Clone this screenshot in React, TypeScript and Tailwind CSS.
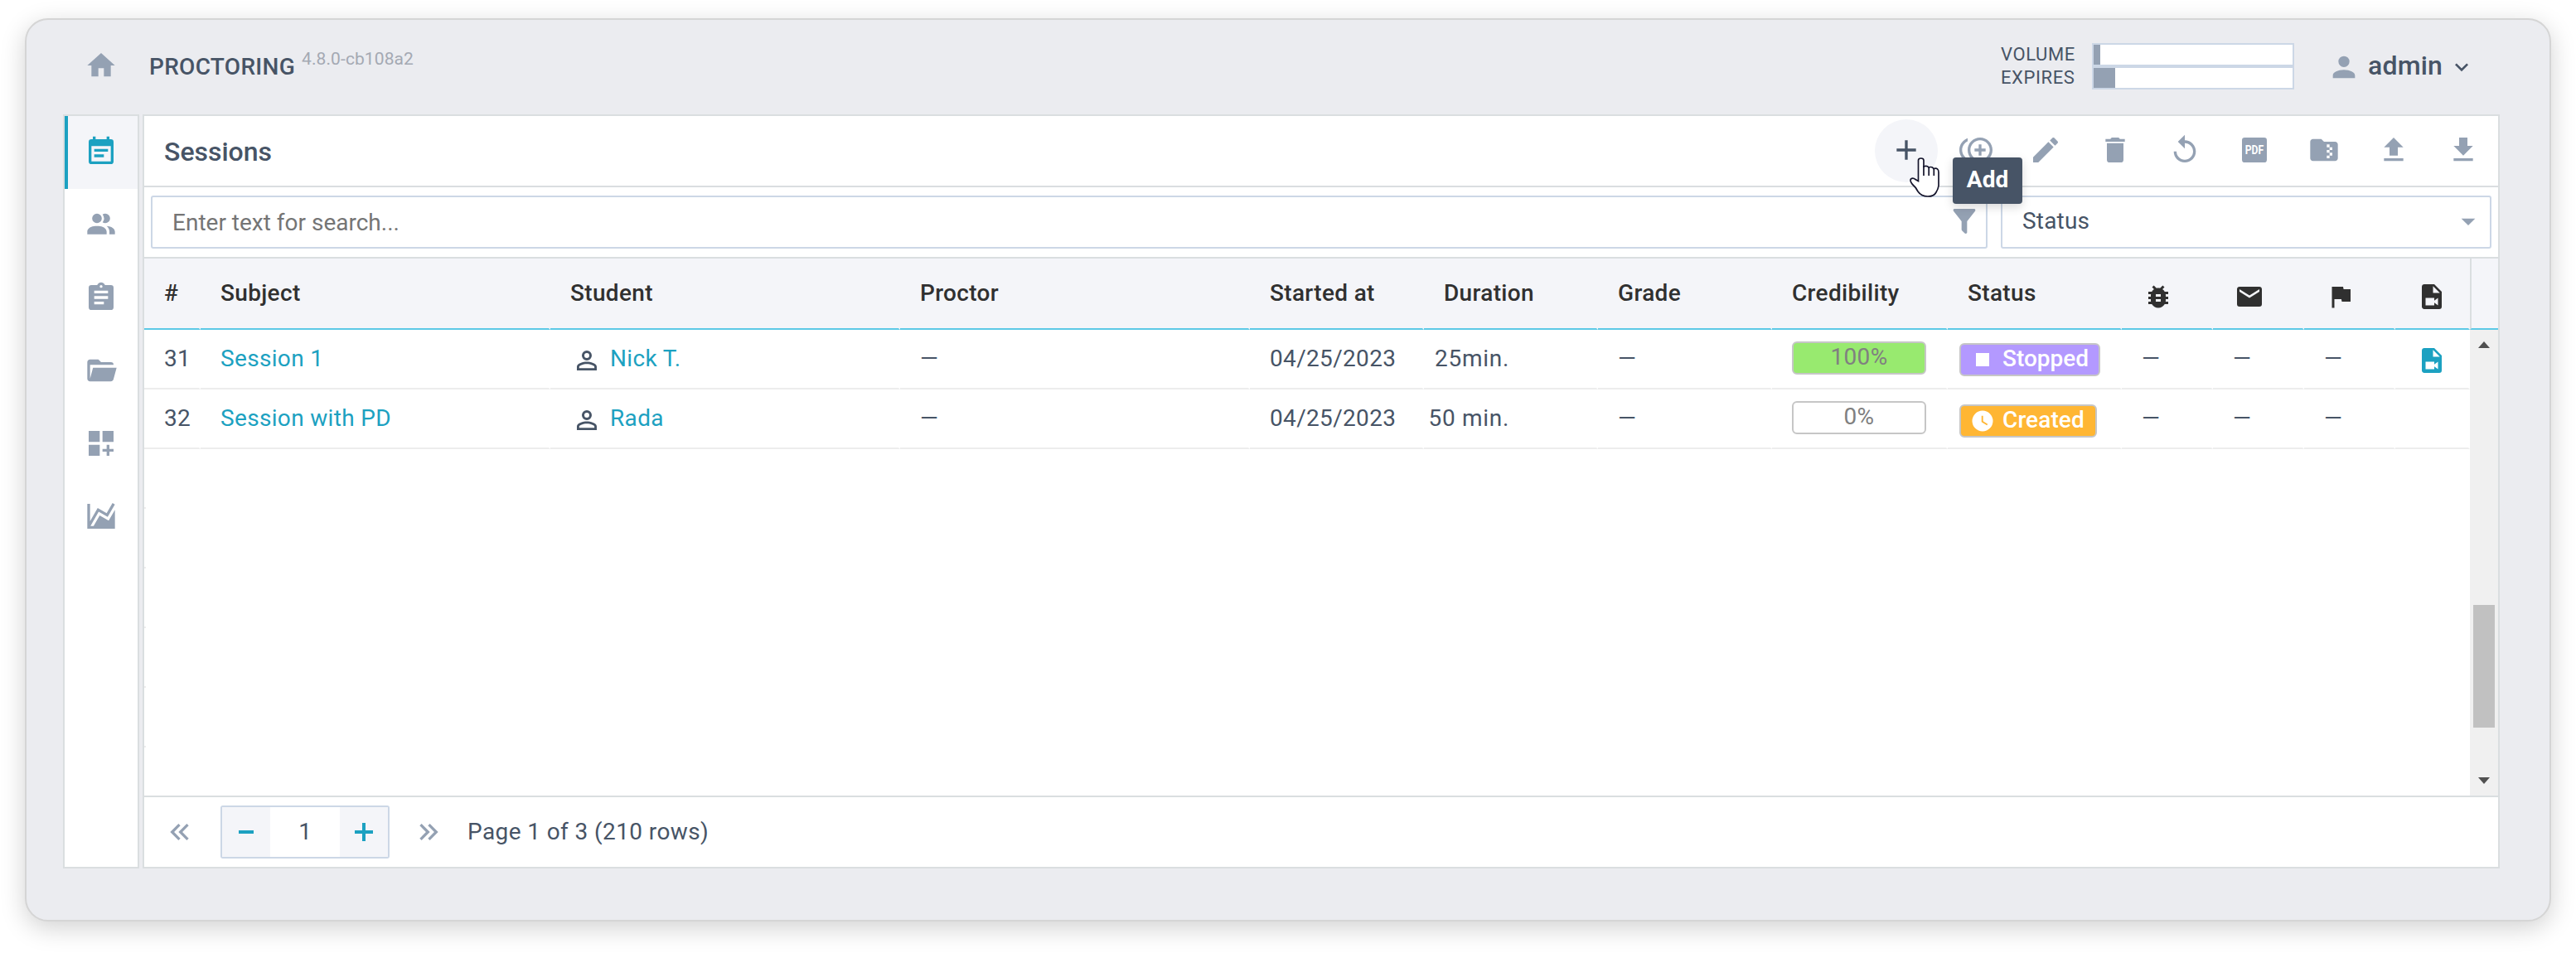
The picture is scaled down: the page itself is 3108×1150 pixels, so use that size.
import type { ReactNode } from 'react';

const paths = {
  home: 'M10,20V14H14V20H19V12H22L12,3L2,12H5V20H10Z',
  calendar:
    'M14,14H7V16H14M19,19H5V8H19M19,3H18V1H16V3H8V1H6V3H5A2,2 0 0,0 3,5V19A2,2 0 0,0 5,21H19A2,2 0 0,0 21,19V5A2,2 0 0,0 19,3M17,10H7V12H17V10Z',
  users:
    'M16 17V19H2V17S2 13 9 13 16 17 16 17M12.5 7.5A3.5 3.5 0 1 0 9 11A3.5 3.5 0 0 0 12.5 7.5M15.94 13A5.32 5.32 0 0 1 18 17V19H22V17S22 13.37 15.94 13M15 4A3.39 3.39 0 0 0 13.07 4.59A5 5 0 0 1 13.07 10.41A3.39 3.39 0 0 0 15 11A3.5 3.5 0 0 0 15 4Z',
  clipboard:
    'M17,9H7V7H17M17,13H7V11H17M14,17H7V15H14M12,3A1,1 0 0,1 13,4A1,1 0 0,1 12,5A1,1 0 0,1 11,4A1,1 0 0,1 12,3M19,3H14.82C14.4,1.84 13.3,1 12,1C10.7,1 9.6,1.84 9.18,3H5A2,2 0 0,0 3,5V19A2,2 0 0,0 5,21H19A2,2 0 0,0 21,19V5A2,2 0 0,0 19,3Z',
  folder:
    'M19,20H4C2.89,20 2,19.1 2,18V6C2,4.89 2.89,4 4,4H10L12,6H19A2,2 0 0,1 21,8H21L4,8V18L6.14,10H23.21L20.93,18.5C20.7,19.37 19.92,20 19,20Z',
  grid: 'M3,3H11V11H3M13,3H21V11H13M3,13H11V21H3M18,13H16V16H13V18H16V21H18V18H21V16H18V13Z',
  chart:
    'M17.45,15.18L22,7.31V19L22,21H2V3H4V15.54L9.5,6L16,9.78L20.24,2.45L21.97,3.45L16.74,12.5L10.23,8.75L4.31,19H6.57L10.96,11.44L17.45,15.18Z',
  plus: 'M19,13H13V19H11V13H5V11H11V5H13V11H19V13Z',
  duplicate:
    'M16,8H14V11H11V13H14V16H16V13H19V11H16M2,12C2,9.21 3.64,6.8 6,5.68V3.5C2.5,4.76 0,8.09 0,12C0,15.91 2.5,19.24 6,20.5V18.32C3.64,17.2 2,14.79 2,12M15,3C10.04,3 6,7.04 6,12C6,16.96 10.04,21 15,21C19.96,21 24,16.96 24,12C24,7.04 19.96,3 15,3M15,19C11.14,19 8,15.86 8,12C8,8.14 11.14,5 15,5C18.86,5 22,8.14 22,12C22,15.86 18.86,19 15,19Z',
  pencil:
    'M20.71,7.04C21.1,6.65 21.1,6 20.71,5.63L18.37,3.29C18,2.9 17.35,2.9 16.96,3.29L15.12,5.12L18.87,8.87M3,17.25V21H6.75L17.81,9.93L14.06,6.18L3,17.25Z',
  trash: 'M19,4H15.5L14.5,3H9.5L8.5,4H5V6H19M6,19A2,2 0 0,0 8,21H16A2,2 0 0,0 18,19V7H6V19Z',
  replay:
    'M12 5V1L7 6l5 5V7c3.31 0 6 2.69 6 6s-2.69 6-6 6-6-2.69-6-6H4c0 4.42 3.58 8 8 8s8-3.58 8-8-3.58-8-8-8z',
  zip: 'M20 6H12L10 4H4C2.9 4 2 4.9 2 6V18C2 19.1 2.9 20 4 20H20C21.1 20 22 19.1 22 18V8C22 6.9 21.1 6 20 6M18 12H16V14H18V16H16V18H14V16H16V14H14V12H16V10H14V8H16V10H18V12Z',
  upload: 'M9,16V10H5L12,3L19,10H15V16H9M5,20V18H19V20H5Z',
  download: 'M5,20H19V18H5M19,9H15V3H9V9H5L12,16L19,9Z',
  filter:
    'M14,12V19.88C14.04,20.18 13.94,20.5 13.71,20.71C13.32,21.1 12.69,21.1 12.3,20.71L10.29,18.7C10.06,18.47 9.96,18.16 10,17.87V12H9.97L4.21,4.62C3.87,4.19 3.95,3.56 4.38,3.22C4.57,3.08 4.78,3 5,3H19C19.22,3 19.43,3.08 19.62,3.22C20.05,3.56 20.13,4.19 19.79,4.62L14.03,12H14Z',
  menuDown: 'M7,10L12,15L17,10H7Z',
  account:
    'M12,4A4,4 0 0,1 16,8A4,4 0 0,1 12,12A4,4 0 0,1 8,8A4,4 0 0,1 12,4M12,14C16.42,14 20,15.79 20,18V20H4V18C4,15.79 7.58,14 12,14Z',
  accountOutline:
    'M12,4A4,4 0 0,1 16,8A4,4 0 0,1 12,12A4,4 0 0,1 8,8A4,4 0 0,1 12,4M12,6A2,2 0 0,0 10,8A2,2 0 0,0 12,10A2,2 0 0,0 14,8A2,2 0 0,0 12,6M12,13C14.67,13 20,14.33 20,17V20H4V17C4,14.33 9.33,13 12,13M12,14.9C9.03,14.9 5.9,16.36 5.9,17V18.1H18.1V17C18.1,16.36 14.97,14.9 12,14.9Z',
  chevronDown: 'M7.41,8.58L12,13.17L16.59,8.58L18,10L12,16L6,10L7.41,8.58Z',
  first:
    'M18.41,7.41L17,6L11,12L17,18L18.41,16.59L13.83,12L18.41,7.41M12.41,7.41L11,6L5,12L11,18L12.41,16.59L7.83,12L12.41,7.41Z',
  last: 'M5.59,7.41L7,6L13,12L7,18L5.59,16.59L10.17,12L5.59,7.41M11.59,7.41L13,6L19,12L13,18L11.59,16.59L16.17,12L11.59,7.41Z',
  stop: 'M18,18H6V6H18V18Z',
  clock:
    'M12,2A10,10 0 0,0 2,12A10,10 0 0,0 12,22A10,10 0 0,0 22,12A10,10 0 0,0 12,2M16.2,16.2L11,13V7H12.5V12.2L17,14.9L16.2,16.2Z',
  bug: 'M14,12H10V10H14M14,16H10V14H14M20,8H17.19C16.74,7.22 16.12,6.55 15.37,6.04L17,4.41L15.59,3L13.42,5.17C12.96,5.06 12.5,5 12,5C11.5,5 11.04,5.06 10.59,5.17L8.41,3L7,4.41L8.62,6.04C7.88,6.55 7.26,7.22 6.81,8H4V10H6.09C6.04,10.33 6,10.66 6,11V12H4V14H6V15C6,15.34 6.04,15.67 6.09,16H4V18H6.81C7.85,19.79 9.78,21 12,21C14.22,21 16.15,19.79 17.19,18H20V16H17.91C17.96,15.67 18,15.34 18,15V14H20V12H18V11C18,10.66 17.96,10.33 17.91,10H20V8Z',
  mail: 'M20,8L12,13L4,8V6L12,11L20,6M20,4H4C2.89,4 2,4.89 2,6V18A2,2 0 0,0 4,20H20A2,2 0 0,0 22,18V6C22,4.89 21.1,4 20,4Z',
  flag: 'M14.4,6L14,4H5V21H7V14H12.6L13,16H20V6H14.4Z',
  fileVideo:
    'M13,9H18.5L13,3.5V9M6,2H14L20,8V20A2,2 0 0,1 18,22H6C4.89,22 4,21.1 4,20V4C4,2.89 4.89,2 6,2M17,19V13L14,15.2V13H7V19H14V16.8L17,19Z',
};

type IconName = keyof typeof paths;

const Icon = ({ name, className = 'size-10' }: { name: IconName; className?: string }) => (
  <svg viewBox="0 0 24 24" fill="currentColor" className={`shrink-0 ${className}`}>
    <path d={paths[name]} />
  </svg>
);

const PdfIcon = () => (
  <svg viewBox="0 0 24 24" className="size-10">
    <rect x="3" y="3" width="18" height="18" rx="2" fill="currentColor" />
    <text x="12" y="15" textAnchor="middle" textLength="13.5" lengthAdjust="spacingAndGlyphs" fontSize="8.6" fontWeight="700" fill="#fff">
      PDF
    </text>
  </svg>
);

const HandCursor = () => (
  <svg viewBox="0 0 36 48" className="absolute left-[42px] top-[46px] z-20 h-12 w-9" fill="none" stroke="#14142b" strokeWidth="1.7">
    <path
      d="M10.5 28.5V3.5Q10.5 1 13.7 1Q17 1 17 3.5V11Q21 9.500 23 12Q27 10.500 29 13.500Q35 12 35 18V34Q34.500 38 32 42Q29.500 47 22 47Q14 47 10 41Q7.500 36 3 32Q0 28 1.500 26Q4 24 7 26.500Z"
      fill="#fff"
    />
    <path d="M17 10V22M23.200 12V22M29.300 13.500V22" />
  </svg>
);

const sidebar: IconName[] = ['calendar', 'users', 'clipboard', 'folder', 'grid', 'chart'];

const Header = () => (
  <header className="flex h-[114px] items-center pl-[70px] pr-[90px] text-[#475466]">
    <Icon name="home" className="mb-1 size-10 text-[#94a1b3]" />
    <span className="ml-[38px] w-[178px] whitespace-nowrap text-[28px] font-medium tracking-[0.3px]">PROCTORING</span>
    <span className="mb-[19px] ml-[6px] text-[21px] tracking-[0.1px] text-[#a4a9b3]">4.8.0-cb108a2</span>
    <div className="mb-[2px] ml-auto flex items-center">
      <div className="w-[110px] text-[22px] leading-7 tracking-[0.6px]">
        <div>VOLUME</div>
        <div>EXPIRES</div>
      </div>
      <div className="w-[244px]">
        <div className="h-7 border-2 border-[#ccd7e6] bg-white">
          <div className="h-full w-2 bg-[#94a1b3]" />
        </div>
        <div className="h-7 border-2 border-[#ccd7e6] bg-white">
          <div className="h-full w-[26px] bg-[#94a1b3]" />
        </div>
      </div>
    </div>
    <Icon name="account" className="ml-10 size-10 text-[#94a1b3]" />
    <span className="mb-1 ml-[9px] w-[97px] text-[32px] font-medium tracking-[0.2px]">admin</span>
    <Icon name="chevronDown" className="size-8" />
  </header>
);

const ToolButton = ({ children }: { children: ReactNode }) => (
  <button className="flex size-[76px] items-center justify-center rounded-full pb-[3px]">{children}</button>
);

const Toolbar = () => (
  <div className="flex h-[86px] items-center border-b-2 border-[#dadee0] pl-6 pr-1">
    <h1 className="mr-auto pt-[1px] text-[32px] font-medium text-[#475466]">Sessions</h1>
    <div className="flex gap-2 text-[#94a1b3]">
      <div className="relative rounded-full bg-[#f4f5f9] text-[#475466]">
        <ToolButton>
          <Icon name="plus" />
        </ToolButton>
        <HandCursor />
        <div className="absolute left-[94px] top-[46px] z-10 flex h-14 w-[84px] items-center justify-center rounded bg-[#475466] pb-[3px] text-[28px] font-bold text-white shadow-[0_4px_12px_rgba(0,0,0,0.15)]">
          Add
        </div>
      </div>
      <ToolButton><Icon name="duplicate" /></ToolButton>
      <ToolButton><Icon name="pencil" /></ToolButton>
      <ToolButton><Icon name="trash" /></ToolButton>
      <ToolButton><Icon name="replay" /></ToolButton>
      <ToolButton><PdfIcon /></ToolButton>
      <ToolButton><Icon name="zip" /></ToolButton>
      <ToolButton><Icon name="upload" /></ToolButton>
      <ToolButton><Icon name="download" /></ToolButton>
    </div>
  </div>
);

const Filters = () => (
  <div className="flex h-[86px] gap-4 border-b-2 border-[#dadee0] px-2 pt-[10px]">
    <div className="flex h-16 w-[2216px] items-center justify-between rounded-[3px] border-2 border-[#ccd7e6] pl-6 pr-[6px] text-[#757575]">
      <span className="pt-[1px]">Enter text for search...</span>
      <Icon name="filter" className="mb-[2px] size-10 text-[#94a1b3]" />
    </div>
    <div className="flex h-16 w-[592px] items-center justify-between rounded-[3px] border-2 border-[#ccd7e6] pb-[2px] pl-6 pr-[6px]">
      <span className="tracking-[0.2px]">Status</span>
      <Icon name="menuDown" className="size-10 text-[#94a1b3]" />
    </div>
  </div>
);

// # | subject | student | proctor | started | duration | grade | credibility | status | 4 icon columns
const columns = 'grid grid-cols-[68px_422px_422px_422px_210px_210px_210px_212px_210px_110px_110px_110px_90px]';

const Cell = ({ className = 'pl-6', children }: { className?: string; children?: ReactNode }) => (
  <div className={`flex h-[72px] items-center whitespace-nowrap border-b-2 border-r-2 border-b-[#ededed] border-r-white ${className}`}>
    {children}
  </div>
);

const HeadCell = ({ className = 'pl-6', children }: { className?: string; children: ReactNode }) => (
  <div className={`flex h-[86px] items-center whitespace-nowrap border-b-2 border-r-2 border-b-[#5cc9e6] border-r-[#f4f5f9] ${className}`}>
    {children}
  </div>
);

const Student = ({ name }: { name: string }) => (
  <>
    <Icon name="accountOutline" className="mt-1 size-9" />
    <span className="ml-[10px] text-[#1ca1c1]">{name}</span>
  </>
);

const Table = () => (
  <div className="flex h-[648px] flex-col tracking-[0.33px]">
    <div className="flex bg-[#f4f5f9] font-medium text-[#303030]">
      <div className={columns}>
        <HeadCell>#</HeadCell>
        <HeadCell>Subject</HeadCell>
        <HeadCell>Student</HeadCell>
        <HeadCell>Proctor</HeadCell>
        <HeadCell>Started at</HeadCell>
        <HeadCell>Duration</HeadCell>
        <HeadCell>Grade</HeadCell>
        <HeadCell>Credibility</HeadCell>
        <HeadCell>Status</HeadCell>
        <HeadCell className="pl-[26px] pt-[7px]"><Icon name="bug" className="size-9" /></HeadCell>
        <HeadCell className="pl-[26px] pt-[7px]"><Icon name="mail" className="size-9" /></HeadCell>
        <HeadCell className="pl-[26px] pt-[7px]"><Icon name="flag" className="size-9" /></HeadCell>
        <HeadCell className="pl-[26px] pt-[7px]"><Icon name="fileVideo" className="size-9" /></HeadCell>
      </div>
      <div className="flex-1 border-b-2 border-l-2 border-b-[#5cc9e6] border-l-[#dadee0]" />
    </div>

    <div className="flex flex-1">
      <div className="w-[2806px]">
        <div className={columns}>
          <Cell>31</Cell>
          <Cell className="pl-6 text-[#1ca1c1]">Session 1</Cell>
          <Cell className="pl-[26px]"><Student name="Nick T." /></Cell>
          <Cell>—</Cell>
          <Cell>04/25/2023</Cell>
          <Cell className="justify-end pr-[105px] tracking-[0.7px]">25min.</Cell>
          <Cell>—</Cell>
          <Cell>
            <div className="mb-[2px] h-10 w-[162px] rounded-md border-2 border-[#c6c6c6] bg-[#98ea6f] text-center leading-[33px] text-[#808080]">100%</div>
          </Cell>
          <Cell className="pl-[14px]">
            <div className="mt-[2px] flex h-10 w-[170px] items-center rounded-md border-2 border-[#c6c6c6] bg-[#b399ff] pl-[10px] font-medium tracking-normal text-white">
              <Icon name="stop" className="size-8" />
              <span className="mb-[3px] ml-2">Stopped</span>
            </div>
          </Cell>
          <Cell>—</Cell>
          <Cell>—</Cell>
          <Cell>—</Cell>
          <Cell className="pl-[26px] pt-1 text-[#1ca1c1]"><Icon name="fileVideo" className="size-9" /></Cell>

          <Cell>32</Cell>
          <Cell className="pl-6 text-[#1ca1c1]">Session with PD</Cell>
          <Cell className="pl-[26px]"><Student name="Rada" /></Cell>
          <Cell>—</Cell>
          <Cell>04/25/2023</Cell>
          <Cell className="justify-end pr-[105px] tracking-[0.7px]">50 min.</Cell>
          <Cell>—</Cell>
          <Cell>
            <div className="mb-[2px] h-10 w-[162px] rounded-md border-2 border-[#c6c6c6] text-center leading-[33px] text-[#808080]">0%</div>
          </Cell>
          <Cell className="pl-[14px]">
            <div className="mt-[6px] flex h-10 w-[166px] items-center rounded-md border-2 border-[#c6c6c6] bg-[#ffb633] pl-[11px] font-medium tracking-[0.1px] text-white">
              <Icon name="clock" className="size-[30px]" />
              <span className="mb-[3px] ml-[9px]">Created</span>
            </div>
          </Cell>
          <Cell>—</Cell>
          <Cell>—</Cell>
          <Cell>—</Cell>
          <Cell />
        </div>
        {[0, 1, 2, 3, 4].map((i) => (
          <div key={i} className="h-[72px] w-[2px] border-b-2 border-[#ededed]" />
        ))}
      </div>

      {/* scrollbar */}
      <div className="flex w-[34px] flex-col items-center bg-[#f0f0f0] text-[#505050]">
        <svg viewBox="0 0 14 8" className="mt-[14px] h-2 w-[14px]" fill="currentColor"><path d="M7 0L14 8H0Z" /></svg>
        <div className="mt-[310px] h-[148px] w-[26px] bg-[#c1c1c1]" />
        <svg viewBox="0 0 14 8" className="mt-[60px] h-2 w-[14px]" fill="currentColor"><path d="M0 0H14L7 8Z" /></svg>
      </div>
    </div>
  </div>
);

const Pager = () => (
  <div className="flex h-[86px] items-center border-t-2 border-[#dadee0] pl-[23px]">
    <Icon name="first" className="size-10 text-[#94a1b3]" />
    <div className="ml-[29px] flex h-16 w-[204px] rounded-[3px] border-2 border-[#ccd7e6] text-[#1ca1c1]">
      <div className="flex w-[58px] items-center justify-center bg-[#f4f5f9]">
        <div className="h-1 w-[18px] bg-current" />
      </div>
      <div className="flex flex-1 items-center justify-center text-[#475466]">1</div>
      <div className="flex w-[58px] items-center justify-center bg-[#f4f5f9]">
        <svg viewBox="0 0 22 22" className="size-[22px]" fill="currentColor"><path d="M9 0H13V9H22V13H13V22H9V13H0V9H9Z" /></svg>
      </div>
    </div>
    <Icon name="last" className="ml-[27px] size-10 text-[#94a1b3]" />
    <span className="ml-[27px] tracking-[0.4px]">Page 1 of 3 (210 rows)</span>
  </div>
);

export default function App() {
  return (
    <div className="h-[1150px] w-[3108px] overflow-hidden bg-white px-[30px] pt-[22px] font-['Roboto',sans-serif] text-[28px] text-[#475466]">
      <div className="h-[1090px] rounded-[28px] border-2 border-[#d5d5d5] bg-[#ebecf0] shadow-[0_8px_30px_rgba(0,0,0,0.18)]">
        <Header />
        <div className="flex h-[910px] gap-1 pl-11">
          <nav className="w-[92px] border-2 border-[#dadee0] bg-white text-[#94a1b3]">
            {sidebar.map((name, i) => (
              <div
                key={name}
                className={
                  i === 0
                    ? 'flex h-[88px] items-center justify-center border-l-4 border-[#1ca1c1] bg-[#f4f5f9] pb-[3px] pr-1 text-[#1ca1c1]'
                    : 'flex h-[88px] items-center justify-center pb-[3px]'
                }
              >
                <Icon name={name} />
              </div>
            ))}
          </nav>
          <main className="w-[2844px] border-2 border-[#dadee0] bg-white">
            <Toolbar />
            <Filters />
            <Table />
            <Pager />
          </main>
        </div>
      </div>
    </div>
  );
}
